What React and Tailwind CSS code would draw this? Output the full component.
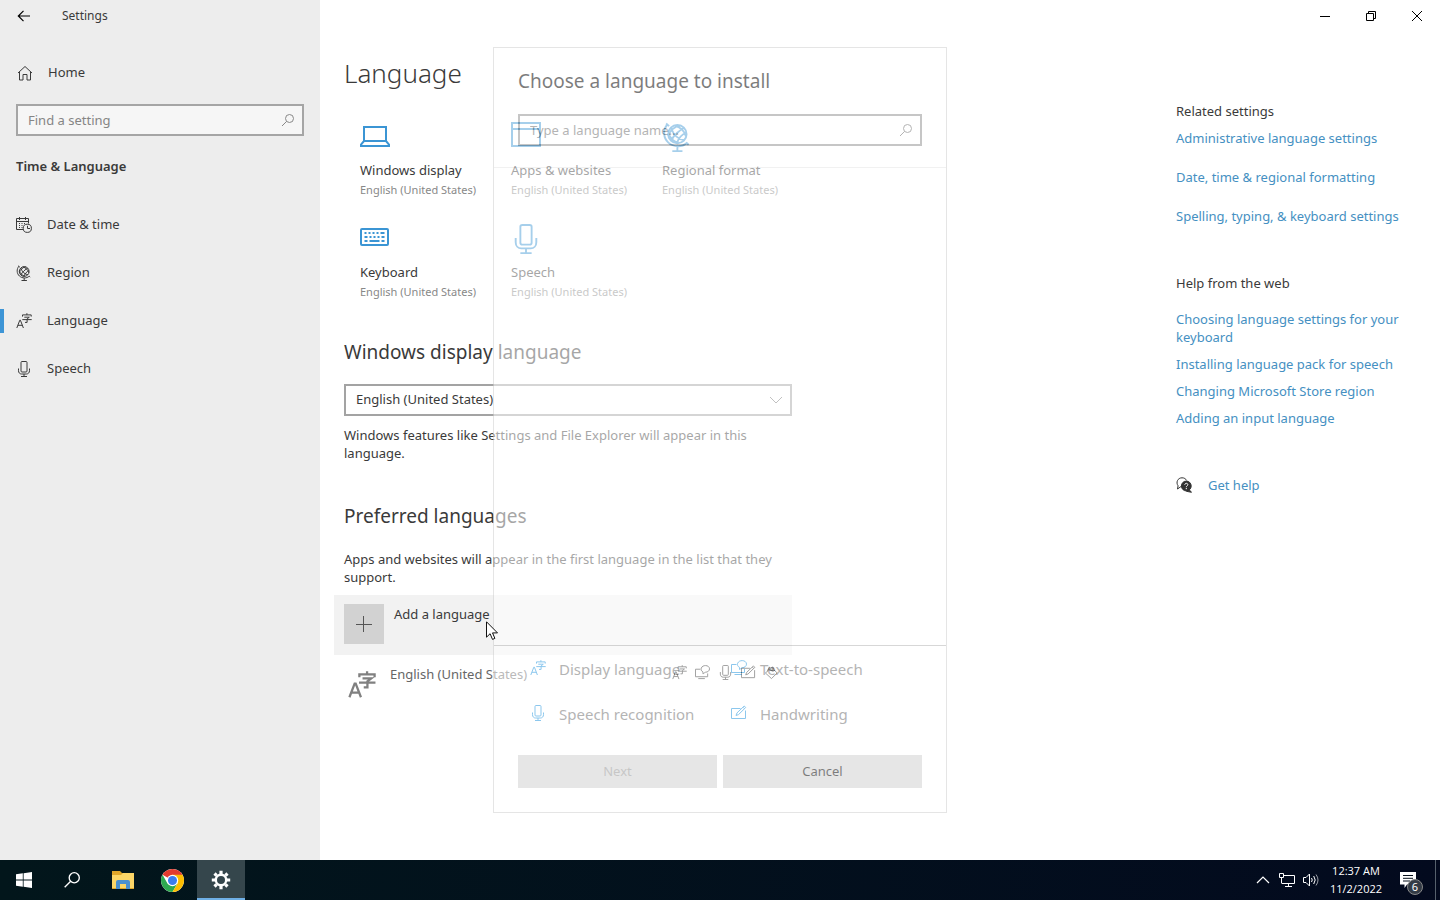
function Svg({ className, box = "0 0 16 16", children, sw = 1 }) {
  return (
    <svg aria-hidden="true" viewBox={box} className={className} fill="none" stroke="currentColor" strokeWidth={sw}>
      {children}
    </svg>
  );
}

const HomeIcon = ({ className }) => (
  <Svg className={className}>
    <path d="M1 8 8 1.500 15 8M2.500 7v8h3.500v-5.500h4V15h3.500V7" />
  </Svg>
);

const SearchIcon = ({ className, sw = 1 }) => (
  <Svg className={className} sw={sw}>
    <circle cx="10" cy="6" r="4.500" />
    <path d="M6.800 9.200 1.500 14.500" />
  </Svg>
);

const SmallSearchIcon = ({ className }) => (
  <Svg className={className}>
    <circle cx="9.500" cy="6.500" r="4" />
    <path d="M6.600 9.400 2 14" />
  </Svg>
);

const CalendarIcon = ({ className }) => (
  <Svg className={className}>
    <path d="M7 12.500H.5v-11h12v5M.5 4.500h12M3.500 0v3M9.500 0v3" />
    <path d="M3 6.500h1M5.500 6.500h1M8 6.500h1M3 8.500h1M5.500 8.500h1M3 10.500h1M5.500 10.500h1" />
    <circle cx="11.300" cy="11.300" r="4.100" />
    <path d="M11.500 8.800v2.700H14" />
  </Svg>
);

const GlobeIcon = ({ className }) => (
  <Svg className={className}>
    <circle cx="8.200" cy="6.500" r="4.900" />
    <path d="M3 1.200C.4 4 .6 8.500 3.400 11c2.800 2.500 7.200 2.600 9.800.2l1 .9M2.200.8l1.600 1.400M8.200 13v2.400M5.500 15.500h5.400" />
    <path d="M4.800 3.200c1.400 3.700 4 6.200 7.200 6.500M11.700 3.200C9.800 4.200 6 7 4.900 9.900M6.800 2c3 .6 5.400 3 6 5.800M3.500 6.200c.8 2.300 2.800 4.400 5.300 5M9.800 1.900C6.700 2.300 4 4.600 3.400 7.500M13 5.600c-1.800.8-4.200 2.800-5 5.600" />
  </Svg>
);

const LanguageIcon = ({ className, sw = 1 }) => (
  <Svg className={className} sw={sw}>
    <path d="M.8 15 3.800 7.200h.6L7.400 15M1.900 12.300h4.400" />
    <path d="M6.500 3.600V1.900h8.700v1.700M10.900.2v1.700M8.300 4.200h5l-2.200 1.700v3.500H9M6.300 6.600h9.400" />
  </Svg>
);

const MicIcon = ({ className, sw = 1 }) => (
  <Svg className={className} sw={sw}>
    <rect x="5" y=".5" width="6" height="10.500" rx="1" />
    <path d="M2.500 7.500v2.200c0 2 1.300 3.300 3 3.300h5c1.700 0 3-1.300 3-3.300V7.500M8 13v2.500M5 15.500h6" />
  </Svg>
);

const SpeakIcon = ({ className }) => (
  <Svg className={className}>
    <path d="M5.500 4.500h-5v8h13V9M3.500 14.500h7M8.500 9.500V7.400C6.600 6.400 6 4.700 6.700 3.200 7.500 1.400 9.300.6 11.200.6c2.400 0 4.300 1.500 4.300 3.500s-1.900 3.600-4.300 3.600c-.6 0-1.700 1.300-2.700 1.800z" />
  </Svg>
);

const PenIcon = ({ className }) => (
  <Svg className={className}>
    <path d="M9.500 3.500h-9v10h14v-8M5 10.500l1-2.600L13.200 1l1.500 1.500L7.500 9.600zM12 2.200l1.500 1.500" />
  </Svg>
);

const SpellIcon = ({ className }) => (
  <Svg className={className}>
    <path d="M4.500 6 1.500 8.500 8 14.500l6-6-3-3M3.500 6.500 5.600 2l2.200 4.500M4.300 5h2.600M8.500 2.200v4.300c3.500.4 3.300-2.200 0-2.200 2.600-.2 2.400-2.200 0-2.100" />
  </Svg>
);

const LaptopIcon = ({ className }) => (
  <Svg className={className} box="0 0 30 30" sw={2}>
    <path d="M4 5h22v14H4zM4 19l-3 3.500V24h28v-1.500L26 19" />
  </Svg>
);

const WindowIcon = ({ className }) => (
  <Svg className={className} box="0 0 30 30" sw={2}>
    <path d="M1 1h28v23H1zM1 7h28" />
  </Svg>
);

const KeyboardIcon = ({ className }) => (
  <Svg className={className} box="0 0 30 30" sw={2}>
    <rect x="1" y="5" width="27" height="16" rx="1" />
    <path d="M4.500 9h2M8.500 9h2M12.500 9h2M16.500 9h2M20.500 9h4M4.500 13h3M9.500 13h2M13.500 13h2M17.500 13h2M21.500 13h3M4.500 17h3M9.500 17h10M21.500 17h3" />
  </Svg>
);

const ChevronDown = ({ className }) => (
  <Svg className={className}>
    <path d="m2 5 6 6 6-6" />
  </Svg>
);

const navItems = [
  { label: "Date & time", Icon: CalendarIcon },
  { label: "Region", Icon: GlobeIcon },
  { label: "Language", Icon: LanguageIcon, current: true },
  { label: "Speech", Icon: MicIcon },
];

function Sidebar() {
  return (
    <aside className="flex w-80 shrink-0 flex-col bg-[#ededed]">
      <div className="flex h-8 items-center">
        <button aria-label="Back" className="flex h-8 w-12 items-center justify-center text-black">
          <Svg className="size-4" sw={1.2}>
            <path d="M14 8H2.500M7.500 2.800 2.300 8l5.200 5.200" />
          </Svg>
        </button>
        <span className="pl-[14px] text-[12px]">Settings</span>
      </div>
      <a href="#home" className="mt-[17px] flex h-12 items-center gap-[15px] pl-[17px]">
        <HomeIcon className="size-4" />
        Home
      </a>
      <div className="mx-4 mt-[7px] flex h-8 items-center border-2 border-[#a5a5a5] bg-[#f6f6f6] pr-[6px]">
        <input
          aria-label="Find a setting"
          placeholder="Find a setting"
          className="h-full min-w-0 flex-1 bg-transparent pl-[10px] outline-none placeholder:text-[#858585]"
        />
        <SmallSearchIcon className="size-4 text-[#888]" />
      </div>
      <h2 className="mt-[18px] pl-4 font-semibold leading-6">Time &amp; Language</h2>
      <nav className="mt-[23px] flex flex-col">
        {navItems.map(({ label, Icon, current }) => (
          <a key={label} href="#nav" className="flex h-12 items-center" aria-current={current ? "page" : undefined}>
            <span className={current ? "h-6 w-1 bg-[#3d95d6]" : "h-6 w-1"} />
            <Icon className="ml-3 size-4" />
            <span className="pl-[15px]">{label}</span>
          </a>
        ))}
      </nav>
    </aside>
  );
}

const tiles = [
  { label: "Windows display", Icon: LaptopIcon },
  { label: "Apps & websites", Icon: WindowIcon },
  { label: "Regional format", Icon: GlobeIcon },
  { label: "Keyboard", Icon: KeyboardIcon },
  { label: "Speech", Icon: MicIcon },
];

function LanguageSettings() {
  return (
    <section className="w-[448px]">
      <h1 className="text-[26px] font-light leading-9">Language</h1>
      <div className="mt-[31px] grid grid-cols-[151px_151px_151px] gap-y-[15px] pl-4">
        {tiles.map(({ label, Icon }) => (
          <a key={label} href="#tile" className="flex h-[87px] flex-col items-start">
            <Icon className="size-[30px] text-[#3b95d4]" />
            <span className="mt-2 leading-5">{label}</span>
            <span className="text-[11px] leading-5 whitespace-nowrap text-[#888]">English (United States)</span>
          </a>
        ))}
      </div>

      <h2 className="mt-[27px] text-[19px] leading-7">Windows display language</h2>
      <div className="relative mt-[18px] flex">
        <select
          aria-label="Windows display language"
          className="h-8 w-full appearance-none border-2 border-[#a3a3a3] bg-white pl-[10px]"
        >
          <option>English (United States)</option>
        </select>
        <ChevronDown className="pointer-events-none absolute top-2 right-2 size-4 text-[#777]" />
      </div>
      <p className="mt-[10px] leading-[18px]">
        Windows features like Settings and File Explorer will appear in this language.
      </p>

      <h2 className="mt-10 text-[19px] leading-7">Preferred languages</h2>
      <p className="mt-5 leading-[18px]">
        Apps and websites will appear in the first language in the list that they support.
      </p>
      <button className="mt-[9px] -ml-[10px] flex h-[60px] w-[458px] items-start bg-[#f2f2f2] px-[10px] pt-[9px] text-left">
        <span className="flex size-10 items-center justify-center bg-[#d2d2d2] text-[#555]">
          <Svg className="size-4">
            <path d="M7.500 0v16M0 8.500h16" />
          </Svg>
        </span>
        <span className="pl-[10px] leading-5">Add a language</span>
      </button>
      <div className="flex h-[60px] items-start pt-[9px] pl-1">
        <LanguageIcon className="mt-[7px] size-7 text-[#808080]" sw={1.3} />
        <span className="w-[296px] pl-[14px] leading-5 text-[#666]">English (United States)</span>
        <span className="flex gap-2 pt-px text-[#222]">
          <LanguageIcon className="size-[15px]" />
          <SpeakIcon className="size-[15px]" />
          <MicIcon className="size-[15px]" />
          <PenIcon className="size-[15px]" />
          <SpellIcon className="size-[15px]" />
        </span>
      </div>
    </section>
  );
}

function RelatedLinks() {
  return (
    <aside className="w-[264px] shrink-0 pt-[47px] pr-6 leading-[18px]">
      <h3>Related settings</h3>
      <div className="mt-[9px] flex flex-col gap-[21px] whitespace-nowrap text-[#4590c2]">
        <a href="#admin">Administrative language settings</a>
        <a href="#date">Date, time &amp; regional formatting</a>
        <a href="#spelling">Spelling, typing, &amp; keyboard settings</a>
      </div>
      <h3 className="mt-[49px]">Help from the web</h3>
      <div className="mt-[18px] flex flex-col gap-[9px] text-[#4590c2]">
        <a href="#choosing">Choosing language settings for your keyboard</a>
        <a href="#installing">Installing language pack for speech</a>
        <a href="#region">Changing Microsoft Store region</a>
        <a href="#adding">Adding an input language</a>
      </div>
      <a href="#help" className="mt-[49px] flex items-center gap-4 text-[#4590c2]">
        <Svg className="size-4 text-[#333]">
          <path d="M5 9.500 1.500 12l.6-3.200C-.4 5.500 1.700.8 6 .8c2.300 0 3.700 1 4.600 2.600" />
          <circle cx="10.300" cy="9" r="4.900" fill="currentColor" />
          <path d="m12.500 12 3 3.300-5-1z" fill="currentColor" />
          <path d="M8.800 7.800c0-2 3.200-1.900 3 0-.1 1-1.500 1.100-1.500 2.400M10.300 11v1.200" stroke="#fff" />
        </Svg>
        Get help
      </a>
    </aside>
  );
}

const features = [
  { label: "Display language", Icon: LanguageIcon },
  { label: "Text-to-speech", Icon: SpeakIcon },
  { label: "Speech recognition", Icon: MicIcon },
  { label: "Handwriting", Icon: PenIcon },
];

function InstallDialog() {
  return (
    <div className="pointer-events-none absolute inset-0 flex items-center justify-center">
      <div
        role="dialog"
        aria-label="Choose a language to install"
        className="pointer-events-auto flex h-[766px] w-[454px] flex-col border border-[#d0d0d0] bg-white opacity-55"
      >
        <div className="border-b border-[#e6e6e6] px-6 pt-[19px] pb-[21px]">
          <h2 className="text-[19px] leading-7 text-[#111]">Choose a language to install</h2>
          <div className="mt-[19px] flex h-8 items-center border-2 border-[#999] pr-[6px]">
            <input
              aria-label="Type a language name"
              placeholder="Type a language name..."
              className="h-full min-w-0 flex-1 bg-transparent pl-[10px] outline-none placeholder:text-[#777]"
            />
            <SmallSearchIcon className="size-4 text-[#777]" />
          </div>
        </div>
        <div className="flex-1" />
        <div className="border-t border-[#b8b8b8] px-6 pb-6">
          <div className="grid grid-cols-[201px_201px] pt-px pl-3 text-[15px] text-[#777]">
            {features.map(({ label, Icon }) => (
              <div key={label} className="flex h-[45px] items-center gap-[13px] whitespace-nowrap">
                <Icon className="mb-1 size-4 text-[#2f9be0]" />
                {label}
              </div>
            ))}
          </div>
          <div className="mt-[18px] flex gap-[6px]">
            <button disabled className="h-[33px] flex-1 bg-[#d2d2d2] text-[#999]">Next</button>
            <button className="h-[33px] flex-1 bg-[#d2d2d2] text-[#111]">Cancel</button>
          </div>
        </div>
      </div>
    </div>
  );
}

function WindowControls() {
  return (
    <div className="flex h-8 justify-end text-black">
      <button aria-label="Minimize" className="flex w-[46px] items-center justify-center">
        <Svg className="size-[10px]" box="0 0 10 10"><path d="M0 5.500h10" /></Svg>
      </button>
      <button aria-label="Restore" className="flex w-[46px] items-center justify-center">
        <Svg className="size-[10px]" box="0 0 10 10"><path d="M.5 2.500h7v7h-7zM2.500 2.500v-2h7v7h-2" /></Svg>
      </button>
      <button aria-label="Close" className="flex w-[46px] items-center justify-center">
        <Svg className="size-[10px]" box="0 0 10 10"><path d="m0 0 10 10M10 0 0 10" /></Svg>
      </button>
    </div>
  );
}

function ChromeLogo() {
  return (
    <svg aria-hidden="true" viewBox="0 0 24 24" className="size-[23px]">
      <circle cx="12" cy="12" r="12" fill="#fff" />
      <path d="M12 12 1.610 6A12 12 0 0 1 22.390 6z" fill="#e33b2e" />
      <path d="M1.610 6A12 12 0 0 0 12 24l5.200-9L12 12l-5.200 3z" fill="#2da94f" />
      <path d="M22.390 6A12 12 0 0 1 12 24l5.200-9L12 6z" fill="#fdbd00" />
      <circle cx="12" cy="12" r="6" fill="#fff" />
      <circle cx="12" cy="12" r="4.700" fill="#3b7ded" />
    </svg>
  );
}

function Taskbar() {
  const slot = "flex h-10 w-12 items-center justify-center";
  return (
    <footer className="flex h-10 shrink-0 items-center justify-between bg-linear-to-r from-[#02161b] to-[#030a1e] text-white">
      <div className="flex items-center">
        <button aria-label="Start" className={slot}>
          <svg aria-hidden="true" viewBox="0 0 16 16" className="size-4" fill="#fff">
            <path d="M0 2.300 6.800 1.300v6.300H0zM7.600 1.200 16 0v7.600H7.600zM0 8.400h6.800v6.300L0 13.700zM7.600 8.400H16V16l-8.400-1.200z" />
          </svg>
        </button>
        <button aria-label="Search" className={slot}>
          <SearchIcon className="size-[18px]" sw={1.2} />
        </button>
        <div className="flex gap-px pl-[3px]">
          <button aria-label="File Explorer" className={slot}>
            <svg aria-hidden="true" viewBox="0 0 22 20" className="h-5 w-[22px]">
              <path d="M0 1h8l2 2h12v16H0z" fill="#e0a62a" />
              <path d="M0 5h9l2-2h11v15H0z" fill="#fcd667" />
              <path d="M4 19v-7q0-2 2-2h10q2 0 2 2v7h-4v-5H8v5z" fill="#4a90cf" />
            </svg>
          </button>
          <button aria-label="Chrome" className={slot}>
            <ChromeLogo />
          </button>
          <button aria-label="Settings" className="flex h-10 w-12 items-center justify-center border-b-2 border-[#6fb0e6] bg-[#35464c] pt-[2px]">
            <svg aria-hidden="true" viewBox="-10 -10 20 20" className="size-5" fill="none" stroke="#fff">
              <circle r="5.200" strokeWidth="2.400" />
              <path d="M0-6v-3.200M0 6v3.200M-6 0h-3.200M6 0h3.200M4.300-4.300 6.500-6.500M-4.300-4.300-6.500-6.500M4.300 4.300 6.500 6.500M-4.300 4.300-6.500 6.500" strokeWidth="3.200" />
            </svg>
          </button>
        </div>
      </div>
      <div className="flex h-10 items-center">
        <button aria-label="Show hidden icons" className="flex w-6 justify-center">
          <Svg className="size-4" sw={1.2}><path d="m2 11 6-6 6 6" /></Svg>
        </button>
        <button aria-label="Network" className="flex w-6 justify-center">
          <Svg className="size-4">
            <path d="M5 3.500h10.500v8H3M9.500 11.500v3M6 14.500h7M.5 1.500h4v4h-4zM2.500 5.500v6" />
          </Svg>
        </button>
        <button aria-label="Volume" className="flex w-6 justify-center">
          <Svg className="size-4">
            <path d="M.5 5.500h2.500L6.500 2v12L3 10.500H.5zM8.500 6q1.500 2 0 4M10.700 4q3 4 0 8" />
            <path d="M13 2.500q4 5.500 0 11" opacity=".6" />
          </Svg>
        </button>
        <time className="w-[66px] text-center font-['Open_Sans',sans-serif] text-[11px] leading-[18px]">
          12:37 AM
          <br />
          11/2/2022
        </time>
        <button aria-label="Notifications, 6 new" className="relative flex h-10 w-[46px] items-center pl-[11px]">
          <svg aria-hidden="true" viewBox="0 0 16 16" className="size-4">
            <path d="M0 0h16v12.500H7L4.500 16v-3.500H0z" fill="#fff" />
            <path d="M3 3.500h10M3 6.300h10M3 9h7" stroke="#06101c" />
          </svg>
          <span className="absolute top-[19px] left-[18px] flex size-4 items-center justify-center rounded-full border border-[#888] bg-[#333b45] text-[11px]">
            6
          </span>
        </button>
        <span className="h-10 w-[5px] border-l border-[#56606c]" />
      </div>
    </footer>
  );
}

export default function App() {
  return (
    <div className="flex min-h-screen flex-col bg-white font-['Noto_Sans','Open_Sans',sans-serif] text-[13px] text-[#3a3a3a]">
      <div className="relative flex flex-1">
        <Sidebar />
        <div className="flex flex-1 flex-col">
          <WindowControls />
          <main className="flex justify-between pt-[23px] pl-6">
            <LanguageSettings />
            <RelatedLinks />
          </main>
        </div>
        <InstallDialog />
        <svg aria-hidden="true" viewBox="0 0 13 20" className="pointer-events-none absolute top-[621px] left-[486px] h-5 w-[13px]">
          <path d="M.5.8v15.400l3.600-3.500 2.400 5.700 2.400-1-2.400-5.500h5z" fill="#fff" stroke="#111" />
        </svg>
      </div>
      <Taskbar />
    </div>
  );
}
